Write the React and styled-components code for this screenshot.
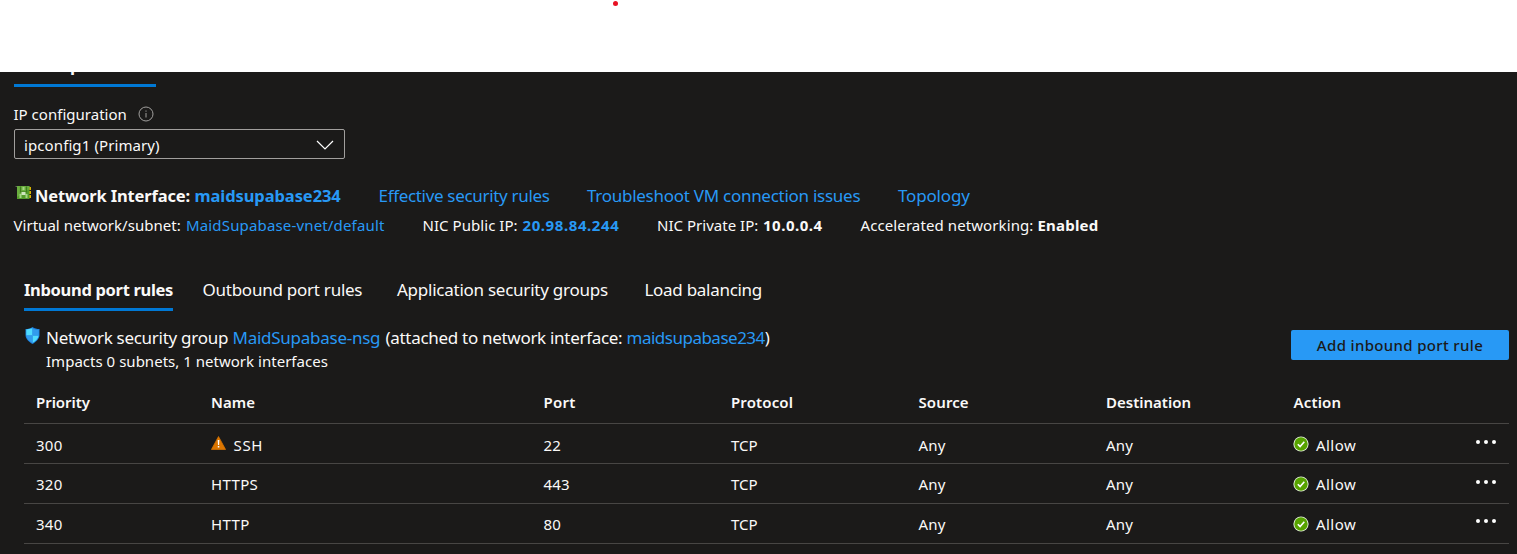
import React from 'react';
import styled, { createGlobalStyle } from 'styled-components';

const GlobalStyle = createGlobalStyle`
  * { box-sizing: border-box; }
  body {
    margin: 0;
    background: #1b1a19;
    color: #faf9f8;
    font-family: "Noto Sans", "Segoe UI", sans-serif;
    font-size: 15px;
    line-height: 20px;
    overflow: hidden;
  }
`;

const Page = styled.div`
  height: 554px;
  overflow: hidden;
`;

const TopStrip = styled.div`
  height: 72px;
  background: #fff;
  display: flex;
  padding: 1px 0 0 613px;
`;

const RedDot = styled.span`
  width: 5px;
  height: 5px;
  border-radius: 50%;
  background: #e81123;
`;

const Panel = styled.main`
  height: 482px;
  display: flex;
  flex-direction: column;
  background: #1b1a19;
`;

const ClippedTab = styled.div`
  width: 142px;
  height: 15px;
  margin-left: 14px;
  padding-left: 56px;
  border-bottom: 3px solid #0078d4;
  border-image: linear-gradient(#075a9b 0 1px, #0078d4 1px) 3;
  overflow: hidden;
  font-size: 17px;
  font-weight: 700;
  line-height: 10px;

  span {
    display: block;
    margin-top: -12px;
  }
`;

/* A run of text; $track tunes the letter spacing and $w reserves its column. */
const Text = styled.span`
  flex: none;
  width: ${(p) => (p.$w ? `${p.$w}px` : 'auto')};
  white-space: nowrap;
  letter-spacing: ${(p) => p.$track || 0}px;
  font-weight: ${(p) => (p.$bold ? 700 : 400)};
  font-size: ${(p) => (p.$size ? `${p.$size}px` : 'inherit')};
`;

const Link = styled(Text).attrs({ as: 'a' })`
  color: #2899f5;
`;

const FieldLabel = styled.div`
  display: flex;
  align-items: center;
  height: 20px;
  margin: 17px 0 0 13.5px;

  svg { margin-left: 11px; }
`;

const Select = styled.div`
  display: flex;
  align-items: center;
  justify-content: space-between;
  width: 331px;
  height: 30px;
  margin: 5px 0 0 14px;
  padding: 2px 10px 0 9px;
  border: 1px solid #a19f9d;
  border-radius: 2px;
`;

const InterfaceRow = styled.div`
  display: flex;
  height: 24px;
  margin-top: 25px;
  padding-left: 15px;
  font-size: 17px;
  line-height: 24px;

  svg { flex: none; margin: 1px 3px 0 0; }
`;

const DetailRow = styled.div`
  display: flex;
  height: 20px;
  margin-top: 7px;
  padding-left: 13.500px;
`;

const Tabs = styled.nav`
  display: flex;
  height: 34px;
  margin: 42px 0 0 24px;
  font-size: 17px;
  line-height: 26px;
`;

const Tab = styled.div`
  flex: none;
  white-space: nowrap;
  width: ${(p) => p.$w}px;
  margin-right: ${(p) => p.$gap}px;
  letter-spacing: ${(p) => p.$track}px;
  font-size: ${(p) => (p.$active ? 16.5 : 17)}px;
  font-weight: ${(p) => (p.$active ? 700 : 400)};
  border-bottom: 3px solid transparent;
  ${(p) => p.$active && 'border-image: linear-gradient(#075a9b 0 1px, #0078d4 1px) 3;'}
`;

const GroupBar = styled.section`
  display: flex;
  justify-content: space-between;
  height: 60px;
  margin-top: 15px;
  padding: 0 8px 0 25px;
`;

const GroupInfo = styled.div`
  display: flex;

  & > svg { flex: none; margin: 1px 6px 0 0; }
`;

const GroupTitle = styled.div`
  display: flex;
  height: 25px;
  font-size: 17px;
  line-height: 24px;
`;

const AddButton = styled.button`
  width: 218px;
  height: 30px;
  margin-top: 4px;
  padding: 0 0 1px;
  border: 0;
  border-radius: 2px;
  background: #2899f5;
  color: #1b1a19;
  font: 500 15px "Noto Sans", sans-serif;
  letter-spacing: 0.34px;
`;

const Row = styled.div`
  display: grid;
  grid-template-columns: 175px 332.5px 187.5px 187.5px 187.5px 187.5px 182px 1fr;
  align-items: start;
  height: ${(p) => p.$h}px;
  margin: 0 8px 0 24px;
  padding: ${(p) => p.$pad}px 0 0 12px;
  border-bottom: 1px solid #484644;
  font-weight: ${(p) => (p.$head ? 600 : 400)};
`;

const Cell = styled.div`
  display: flex;
  height: 20px;
  white-space: nowrap;
  letter-spacing: ${(p) => p.$track || 0}px;

  svg { flex: none; }
`;

const MoreButton = styled.div`
  display: flex;
  gap: 4px;
  padding: ${(p) => p.$top}px 0 0 0;

  i {
    width: 4px;
    height: 4px;
    border-radius: 50%;
    background: #fff;
  }
`;

const IconShift = styled.span`
  display: flex;
  margin: ${(p) => p.$m};
`;

const InfoIcon = () => (
  <svg width="16" height="16" viewBox="0 0 16 16" fill="none" stroke="#a19f9d">
    <circle cx="8" cy="8" r="7" />
    <path d="M8 7v4.5M8 4.5v1.2" />
  </svg>
);

const Chevron = () => (
  <svg width="18" height="10" viewBox="0 0 18 10" fill="none" stroke="#fff" strokeWidth="1.2">
    <path d="M1 1l8 8 8-8" />
  </svg>
);

const NicIcon = () => (
  <svg width="17" height="16" viewBox="0 0 17 16">
    <path d="M.5 1.500H2.500V14" fill="none" stroke="#5b6655" />
    <path d="M14 2h2v3h-2zM14 6h2v3h-2zM14 10h2v3h-2z" fill="#d9b400" />
    <path d="M2 1h12.500v13H2z" fill="#559c2c" />
    <path d="M2 1h12.500v3L2 12z" fill="#78b94c" opacity=".6" />
    <path d="M5.500 1.500v5.500h6V1.500" fill="none" stroke="#3f7d1c" strokeWidth="1.200" />
    <path d="M7.500 2h2v3h-2z" fill="#a5d684" />
    <path d="M4.500 9h2v4h-2zM10.500 9h2v4h-2z" fill="#a5d684" />
    <path d="M6.500 7h4v3h-4z" fill="#cfe6bf" />
  </svg>
);

const ShieldIcon = () => (
  <svg width="15" height="17" viewBox="0 0 15 17">
    <defs>
      <clipPath id="shield">
        <path d="M7.5 0C9.5 1.6 12 2 14.5 2v6c0 4-3.5 6.8-7 9-3.5-2.2-7-5-7-9V2C3 2 5.500 1.600 7.500 0z" />
      </clipPath>
    </defs>
    <g clipPath="url(#shield)">
      <path d="M0 0h15v17H0z" fill="#1c7fdc" />
      <path d="M1.300 2.500l6.200-1.300v7.300H1.300zM7.500 8.500h6.200c-.4 3.200-3 5.600-6.200 7.500z" fill="#50dcff" />
      <path d="M7.500 1.200c1.800 1.200 4 1.500 6.200 1.500v5.800H7.500zM1.300 8.500h6.200V16c-3.400-2-6-4.500-6.200-7.500z" fill="#329bed" />
    </g>
  </svg>
);

const WarningIcon = () => (
  <svg width="15" height="14" viewBox="0 0 15 14">
    <path d="M7.500.5L14.600 13.500H.4z" fill="#db7500" stroke="#db7500" strokeWidth=".7" strokeLinejoin="round" />
    <path d="M6.700 4h1.700l-.3 5H7zM6.800 10h1.500v1.500H6.800z" fill="#fff" />
  </svg>
);

const AllowIcon = () => (
  <svg width="16" height="16" viewBox="0 0 16 16">
    <circle cx="8" cy="8" r="7.600" fill="#e9f2e1" />
    <circle cx="8" cy="8" r="6.700" fill="#57a300" />
    <path d="M4.800 8.200l2.300 2.300 4.200-4.700" fill="none" stroke="#fff" strokeWidth="1.600" />
  </svg>
);

const columns = [
  ['Priority', -0.05],
  ['Name', 0.1],
  ['Port', 0.25],
  ['Protocol', 0.12],
  ['Source', 0.1],
  ['Destination', 0],
  ['Action', 0.15],
];

const rules = [
  { priority: '300', name: 'SSH', port: '22', warn: true, pad: 11, icon: 0, more: 5 },
  { priority: '320', name: 'HTTPS', port: '443', pad: 10, icon: 1, more: 6 },
  { priority: '340', name: 'HTTP', port: '80', pad: 10, icon: 1, more: 5 },
];

export default function App() {
  return (
    <Page>
      <GlobalStyle />
      <TopStrip><RedDot /></TopStrip>
      <Panel>
        <ClippedTab><span>p</span></ClippedTab>
        <FieldLabel>
          <Text $track={0.02}>IP configuration</Text>
          <InfoIcon />
        </FieldLabel>
        <Select>
          <Text $track={0.1}>ipconfig1 (Primary)</Text>
          <Chevron />
        </Select>
        <InterfaceRow>
          <NicIcon />
          <Text $bold $size={16.5} $w={159.5} $track={-0.14}>Network Interface:</Text>
          <Link $bold $size={16.5} $w={184} $track={-0.08}>maidsupabase234</Link>
          <Link $w={208.5} $track={-0.32}>Effective security rules</Link>
          <Link $w={311} $track={-0.27}>Troubleshoot VM connection issues</Link>
          <Link $track={-0.18}>Topology</Link>
        </InterfaceRow>
        <DetailRow>
          <Text $w={172.5} $track={0.03}>Virtual network/subnet:</Text>
          <Link $w={236.5} $track={0.16}>MaidSupabase-vnet/default</Link>
          <Text $w={100} $track={0.05}>NIC Public IP:</Text>
          <Link $bold $w={134.500} $track={0.58}>20.98.84.244</Link>
          <Text $w={106} $track={0.02}>NIC Private IP:</Text>
          <Text $bold $w={97.5} $track={0.5}>10.0.0.4</Text>
          <Text $w={177} $track={0.1}>Accelerated networking:</Text>
          <Text $bold $track={0.2}>Enabled</Text>
        </DetailRow>
        <Tabs>
          <Tab $active $w={149} $gap={29.5} $track={-0.32}>Inbound port rules</Tab>
          <Tab $w={160} $gap={34.5} $track={-0.25}>Outbound port rules</Tab>
          <Tab $w={212} $gap={35.5} $track={-0.25}>Application security groups</Tab>
          <Tab $w={120} $gap={0} $track={-0.29}>Load balancing</Tab>
        </Tabs>
        <GroupBar>
          <GroupInfo>
            <ShieldIcon />
            <div>
              <GroupTitle>
                <Text $w={186.5} $track={-0.28}>Network security group</Text>
                <Link $w={153} $track={-0.26}>MaidSupabase-nsg</Link>
                <Text $w={241} $track={-0.3}>(attached to network interface:</Text>
                <Link $track={-0.5}>maidsupabase234</Link>
                <Text>)</Text>
              </GroupTitle>
              <Text $track={0.02}>Impacts 0 subnets, 1 network interfaces</Text>
            </div>
          </GroupInfo>
          <AddButton>Add inbound port rule</AddButton>
        </GroupBar>
        <Row $head $h={38} $pad={6}>
          {columns.map(([label, track]) => <Cell key={label} $track={track}>{label}</Cell>)}
        </Row>
        {rules.map((r) => (
          <Row key={r.priority} $h={40} $pad={r.pad}>
            <Cell $track={0.25}>{r.priority}</Cell>
            <Cell $track={r.warn ? 0.7 : 0.35}>
              {r.warn && <IconShift $m="1px 7.5px 0 0"><WarningIcon /></IconShift>}
              {r.name}
            </Cell>
            <Cell $track={0.2}>{r.port}</Cell>
            <Cell $track={0.05}>TCP</Cell>
            <Cell $track={0.15}>Any</Cell>
            <Cell $track={0.15}>Any</Cell>
            <Cell $track={0.45}>
              <IconShift $m={`${r.icon + 1}px 7px 0 -0.5px`}><AllowIcon /></IconShift>
              Allow
            </Cell>
            <MoreButton $top={r.more}><i /><i /><i /></MoreButton>
          </Row>
        ))}
      </Panel>
    </Page>
  );
}
